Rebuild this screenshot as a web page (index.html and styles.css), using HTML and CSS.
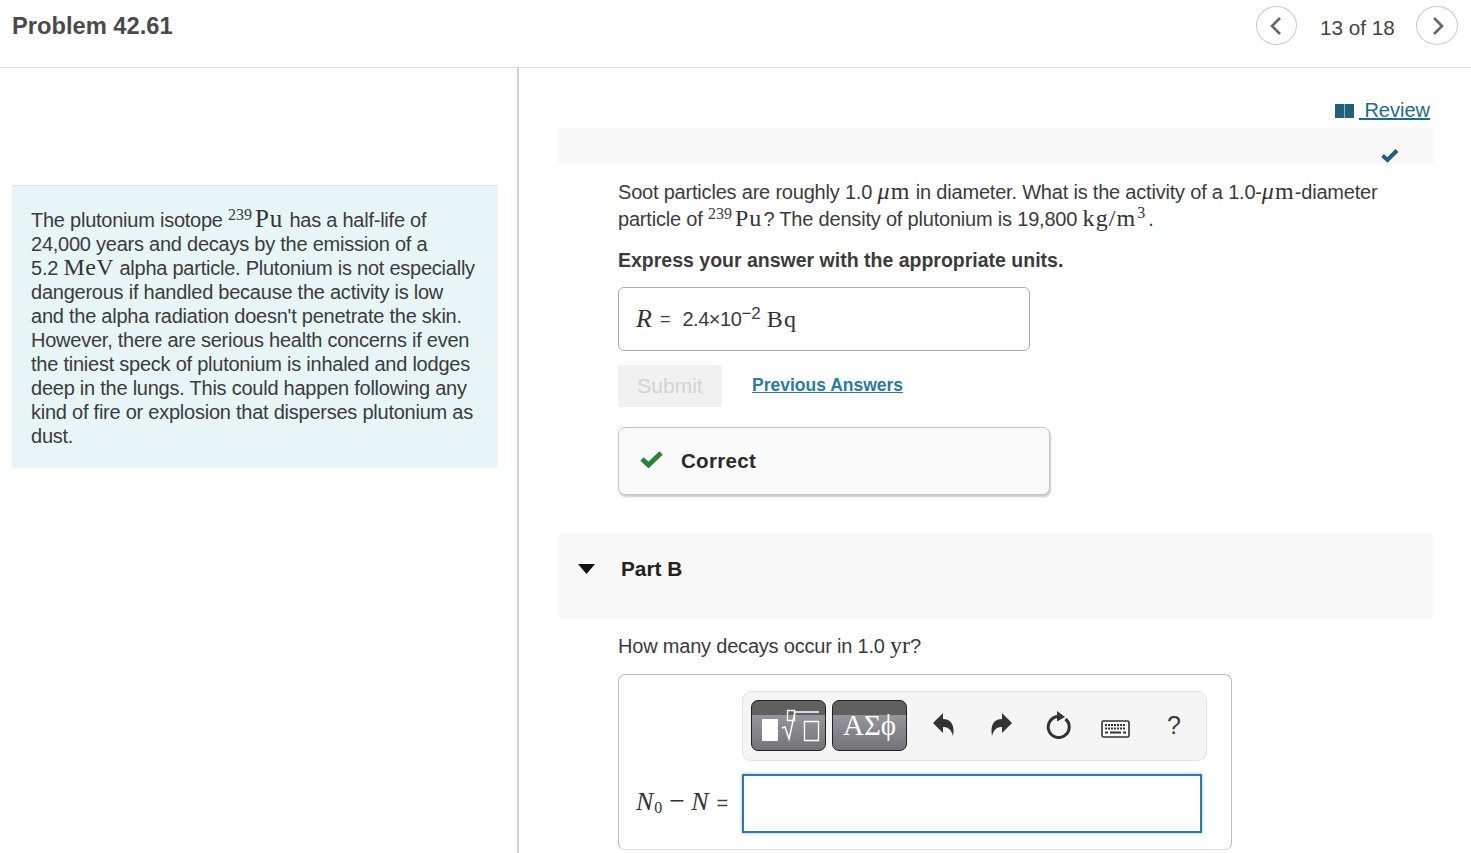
FILE: index.html
```html
<!DOCTYPE html>
<html lang="en">
<head>
<meta charset="utf-8">
<title>Problem 42.61</title>
<link rel="stylesheet" href="styles.css">
</head>
<body>
<header class="topbar">
  <h1 class="title">Problem 42.61</h1>
  <nav class="pager">
    <button class="round" aria-label="Previous"><svg width="14" height="20" viewBox="0 0 14 20"><path d="M10 2 2 10l8 8" fill="none" stroke="#666" stroke-width="2.6"/></svg></button>
    <span class="count">13 of 18</span>
    <button class="round round-next" aria-label="Next"><svg width="14" height="20" viewBox="0 0 14 20"><path d="M4 2l8 8-8 8" fill="none" stroke="#666" stroke-width="2.6"/></svg></button>
  </nav>
</header>
<main class="layout">
  <aside class="left">
    <div class="intro">
      The plutonium isotope <span class="iso"><sup>239</sup><span class="m">Pu</span></span> has a half-life of<br>
      24,000 years and decays by the emission of a<br>
      5.2 <span class="m">MeV</span> alpha particle. Plutonium is not especially<br>
      dangerous if handled because the activity is low<br>
      and the alpha radiation doesn't penetrate the skin.<br>
      However, there are serious health concerns if even<br>
      the tiniest speck of plutonium is inhaled and lodges<br>
      deep in the lungs. This could happen following any<br>
      kind of fire or explosion that disperses plutonium as<br>
      dust.
    </div>
  </aside>
  <section class="right">
    <div class="review-row">
      <a class="review" href="#"><svg class="book" width="19" height="14" viewBox="0 0 19 14"><path d="M0 0h9v14H0z" fill="#22607a"/><path d="M9 0h1v14H9z" fill="#8fb0bf"/><path d="M10 0h9v14h-9z" fill="#22607a"/></svg> Review</a>
    </div>
    <div class="part-a-bar">
      <svg width="18" height="15" viewBox="0 0 18 15"><path d="M1.500 7.500 6.500 12 16 2.500" fill="none" stroke="#1f5f7a" stroke-width="4"/></svg>
    </div>
    <div class="content">
      <p class="q">Soot particles are roughly 1.0 <span class="m"><i>μ</i>m</span> in diameter. What is the activity of a 1.0-<span class="m"><i>μ</i>m</span>-diameter<br>particle of <span class="iso"><sup>239</sup><span class="m">Pu</span></span>? The density of plutonium is 19,800 <span class="m">kg/m<sup class="exp">3</sup></span>.</p>
      <p class="instr">Express your answer with the appropriate units.</p>
      <div class="answer"><span class="m r"><i>R</i></span><span class="eq">=</span><span class="val">2.4×10<sup class="pow">−2</sup></span><span class="m">Bq</span></div>
      <div class="actions">
        <button class="submit">Submit</button>
        <a class="prev" href="#">Previous Answers</a>
      </div>
      <div class="correct">
        <svg class="tick" width="23" height="18" viewBox="0 0 23 18"><path d="M2 9l6.500 6L21 3" fill="none" stroke="#2b8239" stroke-width="5"/></svg>
        <strong>Correct</strong>
      </div>
    </div>
    <div class="part-b-bar">
      <svg class="caret" width="17" height="10" viewBox="0 0 17 10"><path d="M0 0h17L8.500 10z" fill="#111"/></svg>
      <strong>Part B</strong>
    </div>
    <div class="content">
      <p class="q2">How many decays occur in 1.0 <span class="m">yr</span>?</p>
      <div class="editor">
        <div class="toolbar">
          <button class="tool" aria-label="Templates">
            <svg width="73" height="49" viewBox="1 1 73 49"><path d="M11 19h16v22H11z" fill="#fff"/><path d="M36.500 10.500h7v10h-7zM53.500 21.500h14v19h-14z" fill="none" stroke="#fff" stroke-width="1.300"/><path d="M31 28l3-1 4 12 6-27h24" fill="none" stroke="#fff" stroke-width="1.500"/></svg>
          </button>
          <button class="tool tool-greek">ΑΣϕ</button>
          <svg class="ic undo" width="21" height="24" viewBox="0 0 21 24"><path d="M0 10 10 0v6c8 0 12 6 10 17-2-7-5-9-10-9v6z" fill="#333"/></svg>
          <svg class="ic redo" width="21" height="24" viewBox="0 0 21 24"><path d="M21 10 11 0v6C3 6-1 12 1 23c2-7 5-9 10-9v6z" fill="#333"/></svg>
          <svg class="ic reload" width="25" height="28" viewBox="0 0 25 28"><path d="M12.500 5.500A10.500 10.500 0 1 0 19.500 8" fill="none" stroke="#333" stroke-width="3"/><path d="M11 0l8 6-8 4.500z" fill="#333"/></svg>
          <svg class="ic keys" width="29" height="18" viewBox="0 0 29 18"><rect x="1" y="1" width="27" height="16" rx="1.500" fill="#fff" stroke="#333" stroke-width="1.600"/><path d="M4 5h21M4 8.500h21" stroke="#333" stroke-width="2" stroke-dasharray="2 1"/><path d="M4 12.500h3M9 12.500h11M22 12.500h3" stroke="#333" stroke-width="2"/></svg>
          <span class="help">?</span>
        </div>
        <div class="entry-row">
          <span class="label"><span class="m n"><i>N</i><sub>0</sub></span><span class="m minus">−</span><span class="m n"><i>N</i></span><span class="eq">=</span></span>
          <div class="entry"></div>
        </div>
      </div>
    </div>
  </section>
</main>
</body>
</html>
```
FILE: styles.css
```css
* { box-sizing: border-box; }
html, body { margin: 0; height: 853px; overflow: hidden; background: #fff; }
body { font-family: "Liberation Sans", Arial, sans-serif; font-size: 20px; color: #3b3b3b; }
.topbar { height: 68px; border-bottom: 1px solid #ddd; display: flex; justify-content: space-between; padding: 0 13px 0 12px; }
.title { margin: 12px 0 0; font-size: 23.700px; line-height: 28px; font-weight: 700; color: #4a4a4a; }
.pager { display: flex; align-items: flex-start; padding-top: 6px; }
.round { width: 41px; height: 39px; border: 1px solid #ccc; border-radius: 50%; background: #fff; padding: 0; display: flex; align-items: center; justify-content: center; }
.round-next { width: 42px; }
.count { width: 119px; padding-left: 2px; text-align: center; line-height: 44px; font-size: 20.700px; color: #444; }
.layout { display: flex; height: 785px; }
.left { width: 519px; border-right: 2px solid #c6d3de; padding: 117px 19px 0 12px; }
.intro { background: #e7f5f6; border-top: 1px solid #dce6ea; height: 283px; padding: 22px 10px 0 19px; line-height: 24px; letter-spacing: -.24px; }
.m { font-family: "Liberation Serif", serif; font-size: 24px; letter-spacing: 1.100px; line-height: 0; color: #333; }
.intro .m { letter-spacing: .45px; }
.iso { margin-right: 1px; }
.iso sup { font-family: "Liberation Serif", serif; font-size: 16px; letter-spacing: 0; vertical-align: 7px; line-height: 0; margin-right: 3px; }
.intro .iso .m { font-size: 25px; letter-spacing: .8px; }
.right { flex: 1; padding: 0 38px 0 39px; }
.review-row { height: 60px; display: flex; justify-content: flex-end; align-items: flex-start; padding: 30px 3px 0 0; }
.review { color: #1d6a8a; line-height: 24px; text-decoration: underline; }
.book { vertical-align: -1px; margin-right: 5px; }
.part-a-bar { height: 36px; background: #f8f8f8; display: flex; justify-content: flex-end; align-items: flex-end; padding: 0 34px 1px 0; }
.content { padding-left: 60px; }
.q { margin: 15px 0 0; line-height: 27px; letter-spacing: -.2px; }
.exp { font-size: 16px; letter-spacing: 0; vertical-align: 8px; line-height: 0; margin: 0 3px 0 1px; }
.instr { margin: 14px 0 0; font-size: 19.500px; font-weight: 700; line-height: 27px; }
.answer { margin-top: 13px; width: 412px; height: 64px; border: 1px solid #aaa; border-radius: 6px; padding: 0 17px; display: flex; align-items: center; white-space: pre; }
.r { font-size: 26px; letter-spacing: 0; margin-right: 2px; }
.eq { font-size: 18px; margin: 0 12px 0 6px; }
.val { margin-right: 6px; letter-spacing: -.45px; }
.pow { font-size: 17px; letter-spacing: 0; vertical-align: 7px; line-height: 0; }
.actions { display: flex; align-items: center; margin-top: 14px; gap: 30px; }
.submit { width: 104px; height: 42px; border: 0; border-radius: 3px; background: #f1f1f1; color: #d4d4d4; font: 21px "Liberation Sans", sans-serif; padding: 0; }
.prev { font-size: 17.500px; font-weight: 700; color: #2a7ba0; margin-bottom: 2px; }
.correct { margin-top: 20px; width: 432px; height: 68px; background: #fafafa; border: 1px solid #c4c4c4; border-radius: 7px; box-shadow: 1px 2px 2px #ccc; display: flex; align-items: center; gap: 18px; padding-left: 21px; }
.tick { margin-bottom: 4px; }
.correct strong { color: #2b2b2b; font-size: 20.500px; letter-spacing: .3px; }
.part-b-bar { margin-top: 39px; height: 84px; background: #f8f8f8; display: flex; align-items: center; padding: 0 0 14px 20px; gap: 26px; }
.part-b-bar strong { color: #222; font-size: 20.800px; }
.q2 { margin: 15px 0 0; line-height: 27px; letter-spacing: -.2px; }
.q2 .m { letter-spacing: 0; }
.editor { margin-top: 14px; width: 614px; height: 176px; border: 1px solid #bbb; border-bottom-color: #ddd; border-radius: 7px; padding: 16px 29px 0 123px; }
.toolbar { width: 465px; height: 70px; background: #f5f5f5; border: 1px solid #e3e3e3; border-radius: 9px; display: flex; align-items: center; padding: 0 0 2px 8px; }
.tool { width: 75px; height: 51px; border: 1px solid #222; border-radius: 7px; padding: 0; color: #fff; background: linear-gradient(#606060 0 14px, #96959b 14px, #74737a 100%); display: flex; align-items: center; justify-content: center; flex: none; }
.tool-greek { margin-left: 6px; font: 29px "Liberation Serif", serif; }
.ic { flex: none; }
.undo { margin-left: 26px; }
.redo { margin-left: 37px; }
.reload { margin-left: 34px; }
.keys { margin: 8px 0 0 30px; }
.help { margin-left: 37px; font-size: 25px; }
.entry-row { display: flex; align-items: center; margin-top: 13px; margin-left: -106px; }
.label { width: 106px; white-space: pre; }
.label sub { font-size: 16px; line-height: 0; vertical-align: -3px; }
.n { font-size: 26px; letter-spacing: 0; }
.n i { margin-right: 1px; }
.minus { font-size: 28px; margin: 0 6px 0 7px; letter-spacing: 0; }
.label .eq { font-size: 20px; margin: 0 0 0 7px; }
.entry { width: 461px; height: 59px; border: 2px solid #2d7b9e; box-shadow: 0 0 3px #7fb5cc; background: #fff; }
```
